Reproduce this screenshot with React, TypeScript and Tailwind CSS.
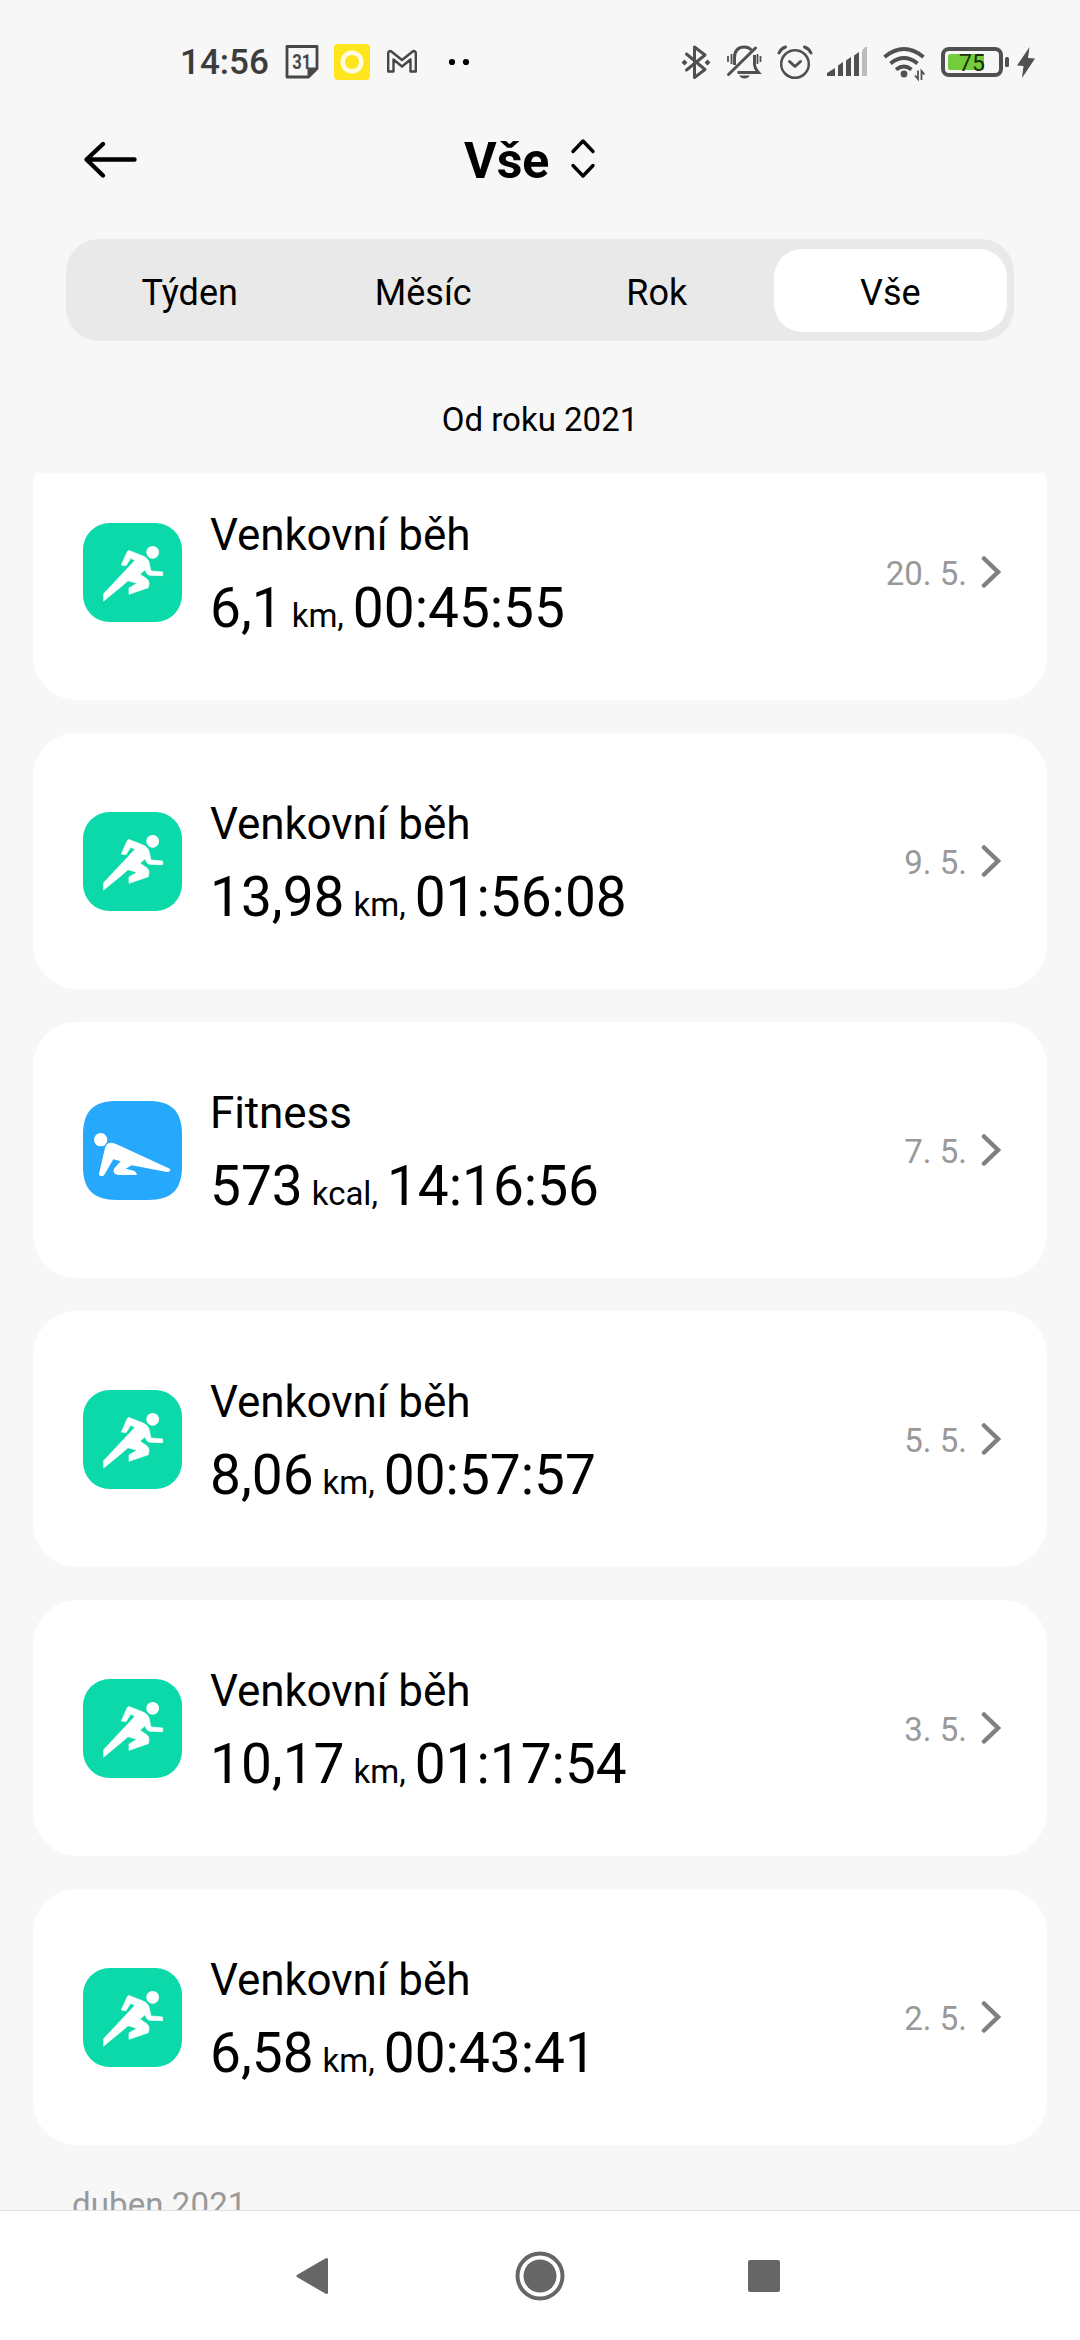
import type { ReactNode } from "react";

type Activity = { kind: "run" | "fitness"; title: string; value: string; unit: string; time: string; date: string };

const activities: Activity[] = [
  { kind: "run", title: "Venkovní běh", value: "6,1", unit: "km,", time: "00:45:55", date: "20. 5." },
  { kind: "run", title: "Venkovní běh", value: "13,98", unit: "km,", time: "01:56:08", date: "9. 5." },
  { kind: "fitness", title: "Fitness", value: "573", unit: "kcal,", time: "14:16:56", date: "7. 5." },
  { kind: "run", title: "Venkovní běh", value: "8,06", unit: "km,", time: "00:57:57", date: "5. 5." },
  { kind: "run", title: "Venkovní běh", value: "10,17", unit: "km,", time: "01:17:54", date: "3. 5." },
  { kind: "run", title: "Venkovní běh", value: "6,58", unit: "km,", time: "00:43:41", date: "2. 5." },
];

const tabs = ["Týden", "Měsíc", "Rok", "Vše"];

function StatusIcon({ box, className, children }: { box: string; className: string; children: ReactNode }) {
  return (
    <svg viewBox={box} className={`h-[42px] shrink-0 ${className}`} fill="none">
      {children}
    </svg>
  );
}

function StatusBar() {
  return (
    <div className="flex h-[124px] items-start pl-[180px] pt-[41px]">
      <span className="mt-px w-[105px] whitespace-nowrap text-[35px] font-medium leading-[42px] text-[#3c3c3c]">14:56</span>
      <StatusIcon box="0 0 34 42" className="w-[34px]">
        <path d="M2 5.500h30v22l-8.500 8.500H2z" stroke="#474747" strokeWidth="2.800" strokeLinejoin="round" />
        <path d="M22.500 36v-9.500H32z" fill="#474747" />
        <text x="16.800" y="28" textAnchor="middle" fontSize="20" fontWeight="700" fill="#474747" fontFamily="Roboto" textLength="19" lengthAdjust="spacingAndGlyphs">31</text>
      </StatusIcon>
      <StatusIcon box="0 0 36 42" className="ml-[15px] w-[36px]">
        <rect y="3" width="36" height="36" rx="4" fill="#ffe51e" />
        <circle cx="18" cy="21" r="9.300" stroke="#fffbe0" strokeWidth="4.500" />
      </StatusIcon>
      <StatusIcon box="0 0 32 42" className="ml-[16px] w-[32px]">
        <path d="M2.200 30.500V12.500q0-2.500 2.500-2.500l11.300 9 11.300-9q2.500 0 2.500 2.500v18h-5.300V18.500L16 25.500l-8.500-7v12z" stroke="#474747" strokeWidth="2.400" strokeLinejoin="round" />
      </StatusIcon>
      <StatusIcon box="0 0 22 42" className="ml-[30px] w-[22px]">
        <circle cx="4" cy="21" r="3.100" fill="#000" />
        <circle cx="18" cy="21" r="3.100" fill="#000" />
      </StatusIcon>

      <StatusIcon box="680 41 32 42" className="ml-[210px] w-[32px]">
        <path d="M686.500 54l18.500 15.500-10.500 8V47l10.500 8L686.500 70" stroke="#505050" strokeWidth="3" strokeLinejoin="round" strokeLinecap="round" />
        <path d="M684.500 59.500l3 3-3 3-3-3zM707.500 59.500l3 3-3 3-3-3z" fill="#505050" />
      </StatusIcon>
      <StatusIcon box="726 41 36 42" className="ml-[14px] w-[36px]">
        <path d="M734.500 65V58q0-11 10-11 4 0 7 3M754.500 55v9q0 4 4 8.500h-21" stroke="#505050" strokeWidth="3" />
        <path d="M728.500 74.500L755.500 48" stroke="#505050" strokeWidth="3" strokeLinecap="round" />
        <path d="M739 75.500h11q-2 3-5.500 3t-5.500-3z" fill="#505050" />
        <path d="M728 56v6M731.500 54v10M757.500 54v10M760.500 56v6" stroke="#505050" strokeWidth="1.800" />
      </StatusIcon>
      <StatusIcon box="777 41 36 42" className="ml-[15px] w-[36px]">
        <circle cx="795" cy="64" r="13.800" stroke="#505050" strokeWidth="2.500" />
        <path d="M789.500 61.500l5.500 5 5.500-5" stroke="#505050" strokeWidth="3" strokeLinecap="round" strokeLinejoin="round" />
        <path d="M779 53q2-4.500 6.500-6M811 53q-2-4.500-6.500-6" stroke="#505050" strokeWidth="3" strokeLinecap="round" />
      </StatusIcon>
      <StatusIcon box="825 41 42 42" className="ml-[13px] w-[42px]">
        <path d="M826 76v-3l8-5v8zM837 76V65.500l5-3.500v14zM845 76V60.500l5-3.500v19zM853 76V55.500l5-3.500v24z" fill="#505050" />
        <path d="M861 76V50.500l3-3.500h2v29z" fill="#bdbdbd" />
      </StatusIcon>
      <StatusIcon box="882 41 43 42" className="ml-[15px] w-[43px]">
        <path d="M883.500 57q19.500-16 39 0M889.500 63.500q13.500-11 27 0M895 69.500q8-6 15.500 0" stroke="#505050" strokeWidth="3.800" />
        <circle cx="903" cy="74" r="3.400" fill="#505050" />
        <path d="M917 70.500v8.500l-3-3.500M920.500 80v-9l3 3.500" stroke="#505050" strokeWidth="1.800" />
      </StatusIcon>
      <StatusIcon box="939 41 70 42" className="ml-[14px] w-[70px]">
        <rect x="942" y="49" width="58" height="26" rx="6" stroke="#505050" strokeWidth="4" fill="#f7f7f7" />
        <rect x="947" y="54" width="36" height="16" rx="2" fill="#73cc3c" />
        <rect x="1004" y="57" width="4" height="10" rx="1.500" fill="#505050" />
        <text x="971" y="70.500" textAnchor="middle" fontSize="23" fontWeight="400" fill="#1c3008" fontFamily="Roboto">75</text>
      </StatusIcon>
      <StatusIcon box="1015 41 20 42" className="ml-[6px] w-[20px]">
        <path d="M1028.500 47l-12.500 18.500 6.500.5-1.500 12 13-19.500-7-.5z" fill="#505050" />
      </StatusIcon>
    </div>
  );
}

function Header() {
  return (
    <div className="flex h-[75px] pl-[82px] pt-[3px]">
      <svg viewBox="0 0 56 64" className="h-[64px] w-[56px]" fill="none" stroke="#000" strokeWidth="4.400" strokeLinecap="round" strokeLinejoin="round">
        <path d="M52.500 32.500H5M21 17L4.500 32.500 21 48.500" />
      </svg>
      <h1 className="ml-[326px] mt-px text-[50px] font-bold leading-[66px]">Vše</h1>
      <svg viewBox="0 0 26 64" className="ml-[21px] h-[64px] w-[26px]" fill="none" stroke="#000" strokeWidth="3.400" strokeLinecap="round" strokeLinejoin="round">
        <path d="M3 24.500l10-10.500 10 10.500M3 38.500l10 10.500 10-10.500" />
      </svg>
    </div>
  );
}

function Tabs() {
  return (
    <div className="mx-[66px] mt-[40px] flex h-[102px] shrink-0 rounded-[33px] bg-[#e9e9e9] px-[7px] pt-[10px]">
      {tabs.map((tab, i) => (
        <div
          key={tab}
          className={`flex h-[83px] flex-1 items-center justify-center rounded-[28px] pt-[5px] text-[36px] ${i === 3 ? "bg-white" : ""}`}
        >
          {tab}
        </div>
      ))}
    </div>
  );
}

function ActivityIcon({ kind }: { kind: Activity["kind"] }) {
  if (kind === "run") {
    return (
      <svg viewBox="39 39 297 297" className="size-[99px] shrink-0">
        <rect x="39" y="39" width="297" height="297" rx="80" fill="#0cd9aa" />
        <circle cx="248" cy="127" r="19" fill="#fff" />
        <path
          fill="#fff"
          stroke="#fff"
          strokeWidth="2"
          strokeLinejoin="round"
          d="M178 122l39 15q14 5 19 16l7 30 35 3v11l-38-1q-8-1-11-8l-4-9-15 14 20 13q8 6 7 15l-2 12-58 20v-19l24-14-27-8-17 15-56 46v-22l94-100-13-6-14 22-14-2 17-38q3-7 7-5z"
        />
      </svg>
    );
  }
  return (
    <svg viewBox="39 33 297 297" className="size-[99px] shrink-0">
      <path fill="#26a8fd" d="M140 33h95c70 0 101 31 101 101v95c0 70-31 101-101 101h-95C70 330 39 299 39 229v-95C39 64 70 33 140 33z" />
      <circle cx="92" cy="149" r="20" fill="#fff" />
      <path
        fill="#fff"
        d="M105 174q4-16 19-16 7 0 16 5l156 72q5 2 5 6-2 6-10 5l-106-20-18 10 26 7q7 4 8 12h-53q-20-2-17-16 2-5 13-16l8-9-22-6-27 46q-3 5-9 5-7-1-7-8z"
      />
    </svg>
  );
}

function Card({ item }: { item: Activity }) {
  return (
    <div className="mx-[33px] mb-[33px] flex h-[256px] items-center rounded-[44px] bg-white pl-[50px] pr-[46px]">
      <ActivityIcon kind={item.kind} />
      <div className="ml-[28px] mt-[16px] grow">
        <div className="text-[44px] leading-[64px] tracking-[-0.1px]">{item.title}</div>
        <div className="flex items-baseline whitespace-nowrap text-[55px] leading-[82px]">
          <span>{item.value}</span>
          <span className="ml-[9px] mr-[9px] text-[33px]">{item.unit}</span>
          <span>{item.time}</span>
        </div>
      </div>
      <span className="mt-[4px] text-[33px] text-[#999]">{item.date}</span>
      <svg viewBox="0 0 20 32" className="ml-[14px] h-[32px] w-[20px]" fill="none" stroke="#808080" strokeWidth="4.500" strokeLinecap="round">
        <path d="M3 2.500L17 16 3 29.500" />
      </svg>
    </div>
  );
}

function NavBar() {
  return (
    <div className="flex h-[130px] items-center border-t border-[#e0e0e0] bg-white pl-[296px]">
      <svg viewBox="0 0 33 38" className="h-[38px] w-[33px]">
        <path d="M2 19L30.500 2.500v33z" fill="#666" stroke="#666" strokeWidth="3" strokeLinejoin="round" />
      </svg>
      <svg viewBox="0 0 50 50" className="ml-[186px] h-[50px] w-[50px]">
        <circle cx="25" cy="25" r="22.500" fill="none" stroke="#666" strokeWidth="4" />
        <circle cx="25" cy="25" r="16.500" fill="#666" />
      </svg>
      <div className="ml-[183px] size-8 rounded-[2px] bg-[#666]" />
    </div>
  );
}

export default function App() {
  return (
    <div className="flex h-[2340px] w-[1080px] flex-col overflow-hidden bg-[#f7f7f7] text-black [font-family:Roboto,sans-serif]">
      <StatusBar />
      <Header />
      <Tabs />
      <div className="flex h-[132px] items-center justify-center pt-[26px] text-[33px]">Od roku 2021</div>
      <div className="flex h-[1737px] flex-col justify-start overflow-hidden">
        <div className="-mt-[29px]">
          {activities.map((item) => (
            <Card key={item.date} item={item} />
          ))}
          <div className="pl-[72px] pt-[7px] text-[33px] leading-[40px] tracking-[0.1px] text-[#999]">duben 2021</div>
        </div>
      </div>
      <NavBar />
    </div>
  );
}
